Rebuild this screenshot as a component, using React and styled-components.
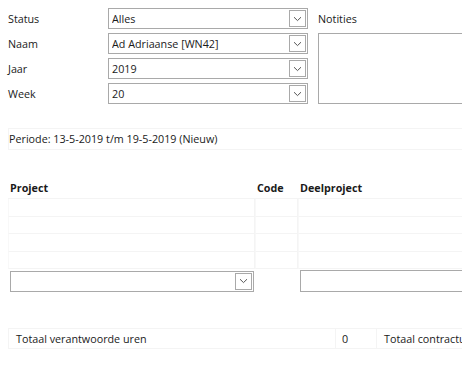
import React from "react";
import styled, { createGlobalStyle } from "styled-components";

const GlobalStyle = createGlobalStyle`
  html, body {
    margin: 0;
    padding: 0;
    background: #ffffff;
    overflow: hidden;
  }
  body {
    font-family: "Open Sans", "Noto Sans", sans-serif;
    font-size: 10.75px;
    color: #1a1a1a;
  }
`;

function Chevron() {
  return (
    <svg width="9" height="6" viewBox="0 0 9 6">
      <path d="M1 1.2 L4.5 4.6 L8 1.2" fill="none" stroke="#555" strokeWidth="1" />
    </svg>
  );
}

function Select({ value, width }) {
  return (
    <SelectBox $width={width}>
      <SelectValue>{value}</SelectValue>
      <DropButton>
        <Chevron />
      </DropButton>
    </SelectBox>
  );
}

function App() {
  return (
    <>
      <GlobalStyle />
      <Page>
        {/* filter velden */}
        <Filters>
          <Label>Status</Label>
          <Select value="Alles" />
          <NotesLabel>Notities</NotesLabel>
          <Label>Naam</Label>
          <Select value="Ad Adriaanse [WN42]" />
          <NotesArea />
          <Label>Jaar</Label>
          <Select value="2019" />
          <Label>Week</Label>
          <Select value="20" />
        </Filters>

        <Periode>Periode: 13-5-2019 t/m 19-5-2019 (Nieuw)</Periode>

        <Table>
          <HeadCell>Project</HeadCell>
          <HeadCell>Code</HeadCell>
          <HeadCell>Deelproject</HeadCell>
          {[0, 1, 2, 3].map((i) => (
            <React.Fragment key={i}>
              <Cell />
              <Cell />
              <Cell />
            </React.Fragment>
          ))}
          <InputCell>
            <Select value="" />
          </InputCell>
          <InputCell />
          <InputCell>
            <TextInput />
          </InputCell>
        </Table>

        <Totals>
          <TotalLabel>Totaal verantwoorde uren</TotalLabel>
          <TotalValue>0</TotalValue>
          <TotalLabel>Totaal contracturen</TotalLabel>
        </Totals>
      </Page>
    </>
  );
}

export default App;

const Page = styled.div`
  width: 560px;
  padding: 8px 0 0 8px;
`;

const Filters = styled.div`
  display: grid;
  grid-template-columns: 100px 200px 10px 240px;
  grid-auto-rows: 21px;
  row-gap: 4px;
  align-items: center;
`;

const Label = styled.div`
  grid-column: 1;
`;

const NotesLabel = styled.div`
  grid-column: 4;
  grid-row: 1;
`;

const NotesArea = styled.div`
  grid-column: 4;
  grid-row: 2 / span 3;
  align-self: stretch;
  border: 1px solid #a9a9a9;
  background: #fff;
`;

const SelectBox = styled.div`
  grid-column: 2;
  display: flex;
  align-items: center;
  height: 21px;
  width: ${(p) => p.$width || "100%"};
  box-sizing: border-box;
  border: 1px solid #a9a9a9;
  background: #fff;
  padding: 0 1px 0 3px;
`;

const SelectValue = styled.div`
  flex: 1;
  white-space: nowrap;
  overflow: hidden;
`;

const DropButton = styled.div`
  width: 17px;
  height: 17px;
  box-sizing: border-box;
  border: 1px solid #a9a9a9;
  display: flex;
  align-items: center;
  justify-content: center;
  background: #fff;
`;

const Periode = styled.div`
  margin-top: 24px;
  height: 22px;
  line-height: 20px;
  box-sizing: border-box;
  border: 1px solid #f4f4f4;
  border-right: none;
`;

const Table = styled.div`
  margin-top: 28px;
  display: grid;
  grid-template-columns: 247px 43px 220px;
  grid-template-rows: 21px repeat(4, 17.5px) 24px;
`;

const HeadCell = styled.div`
  font-weight: 700;
  padding-left: 2px;
  border-bottom: 1px solid #f4f4f4;
  display: flex;
  align-items: center;
`;

const Cell = styled.div`
  border-bottom: 1px solid #f4f4f4;
  border-right: 1px solid #f4f4f4;
  border-left: 1px solid #f8f8f8;
`;

const InputCell = styled.div`
  display: flex;
  align-items: center;
  padding: 0 1px 0 2px;
`;

const TextInput = styled.div`
  flex: 1;
  height: 22px;
  box-sizing: border-box;
  border: 1px solid #a9a9a9;
  background: #fff;
`;

const Totals = styled.div`
  margin-top: 35px;
  display: grid;
  grid-template-columns: 327px 41px 200px;
  height: 19px;
  border-top: 1px solid #f4f4f4;
  border-bottom: 1px solid #f4f4f4;
`;

const TotalLabel = styled.div`
  padding-left: 7px;
  display: flex;
  align-items: center;
  border-left: 1px solid #f4f4f4;
`;

const TotalValue = styled(TotalLabel)`
  padding-left: 6px;
`;
